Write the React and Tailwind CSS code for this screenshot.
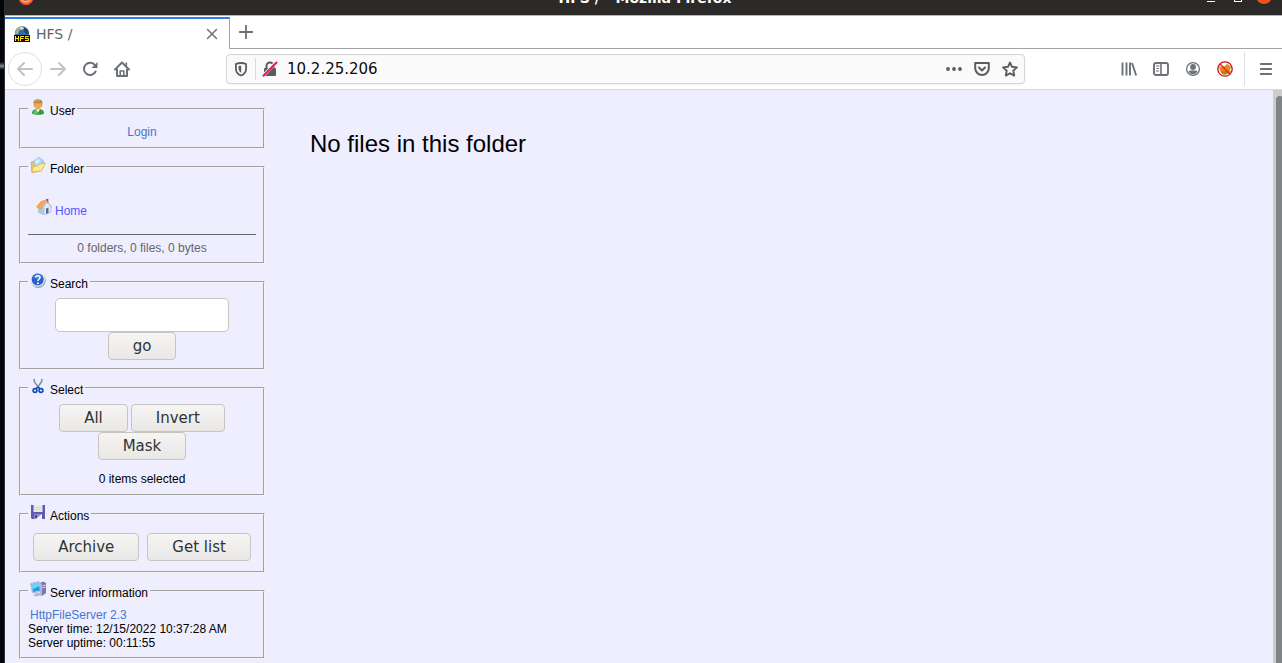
import React from "react";

function FirefoxIcon() {
  return (
    <svg width="16" height="16" viewBox="0 0 16 16" aria-hidden="true">
      <circle cx="8" cy="8" r="7" fill="#ff8a2a" />
      <path d="M1 8a7 7 0 0 0 14 0l-1 2a7 7 0 0 1-12 0z" fill="#f0394f" />
      <circle cx="8" cy="7" r="4" fill="#8a55d8" />
      <path d="M3 8c2 4 7 4 9 0-1 5-8 6-9 0z" fill="#ffb52e" />
    </svg>
  );
}

function HfsIcon() {
  return (
    <svg width="16" height="16" viewBox="0 0 16 16" aria-hidden="true">
      <circle cx="8" cy="7.5" r="7.2" fill="#2f6cab" />
      <path d="M2 4l3-3 3-.7L7 3 5 5 4 8H1z" fill="#b5ad8c" />
      <path d="M9 1l4 2 2 4-3 1-2-3z" fill="#2c4a4a" />
      <path d="M6 1h3l1 2-3 1z" fill="#d8e5e8" />
      <rect y="9" width="16" height="7" fill="#2a0600" />
      <path
        d="M1.500 10v5M4.500 10v5M1.500 12.500h3M6.500 15v-4.500h3.500M6.500 12.500h3M14.800 10.500h-3.300v2h3v2h-3.500"
        fill="none"
        stroke="#ffe51f"
        strokeWidth="1"
      />
    </svg>
  );
}

function CloseIcon() {
  return (
    <svg width="12" height="12" viewBox="0 0 12 12" fill="none" stroke="#6c7077" strokeWidth="1.500" strokeLinecap="round" aria-hidden="true">
      <path d="M1.500 1.500l9 9M10.500 1.500l-9 9" />
    </svg>
  );
}

function PlusIcon() {
  return (
    <svg width="16" height="16" viewBox="0 0 16 16" fill="none" stroke="#6c7077" strokeWidth="1.800" strokeLinecap="round" aria-hidden="true">
      <path d="M8 1.700v12.600M1.700 8h12.600" />
    </svg>
  );
}

function ArrowIcon({ flip }) {
  return (
    <svg width="18" height="18" viewBox="0 0 18 18" fill="none" stroke="#c0c2c6" strokeWidth="2" strokeLinecap="round" strokeLinejoin="round" aria-hidden="true">
      {flip ? <path d="M2 9h14M10 3l6 6-6 6" /> : <path d="M16 9H2M8 3L2 9l6 6" />}
    </svg>
  );
}

function ReloadIcon() {
  return (
    <svg width="16" height="16" viewBox="0 0 16 16" fill="none" aria-hidden="true">
      <path d="M13 4.300A6.100 6.100 0 1 0 13.600 10.500" stroke="#6c7077" strokeWidth="2" strokeLinecap="round" />
      <path d="M15.500 1v6h-6z" fill="#6c7077" />
    </svg>
  );
}

function HomeIcon() {
  return (
    <svg width="16" height="16" viewBox="0 0 16 16" fill="none" stroke="#6c7077" strokeWidth="2" strokeLinejoin="round" strokeLinecap="round" aria-hidden="true">
      <path d="M1 8.500L8 1.500l7 7M3 8.500V15h10V8.500" />
      <path d="M6.200 14.500V10h3.600v4.500" strokeWidth="1.600" />
      <path d="M12.300 2v3" strokeWidth="1.600" />
    </svg>
  );
}

function ShieldIcon() {
  return (
    <svg width="14" height="16" viewBox="0 0 14 16" aria-hidden="true">
      <path d="M7 2c2 0 3.700.4 5.100 1v4.500C12.100 11 10 13.500 7 14.500 4 13.500 1.900 11 1.900 7.500V3C3.300 2.400 5 2 7 2z" fill="none" stroke="#5c5c60" strokeWidth="1.800" />
      <path d="M7.200 4.700v7C5.500 10.900 4.600 9.500 4.600 7.500V5.100z" fill="#5c5c60" />
    </svg>
  );
}

function InsecureLockIcon() {
  return (
    <svg width="16" height="16" viewBox="0 0 16 16" aria-hidden="true">
      <path d="M4.500 8V5a3.500 3.500 0 0 1 7 0v3" fill="none" stroke="#5c5c60" strokeWidth="2" />
      <rect x="2" y="7" width="12" height="8" rx="1" fill="#5c5c60" />
      <path d="M.8 15.200L14.400 1" stroke="#fafafb" strokeWidth="3.200" />
      <path d="M1.500 14.800L14.500 1.500" stroke="#fb0f4a" strokeWidth="2" strokeLinecap="round" />
    </svg>
  );
}

function DotsIcon() {
  return (
    <svg width="16" height="16" viewBox="0 0 16 16" fill="#5c5c60" aria-hidden="true">
      <circle cx="2" cy="8" r="1.900" />
      <circle cx="8" cy="8" r="1.900" />
      <circle cx="14" cy="8" r="1.900" />
    </svg>
  );
}

function PocketIcon() {
  return (
    <svg width="16" height="16" viewBox="0 0 16 16" fill="none" stroke="#5c5c60" strokeWidth="2" strokeLinecap="round" strokeLinejoin="round" aria-hidden="true">
      <path d="M1.200 2h13.600v5.200a6.800 6.800 0 0 1-13.600 0z" />
      <path d="M5 6.500l3 3 3-3" />
    </svg>
  );
}

function StarIcon() {
  return (
    <svg width="16" height="16" viewBox="0 0 16 16" fill="none" stroke="#5c5c60" strokeWidth="1.900" strokeLinejoin="round" aria-hidden="true">
      <path d="M8 1.500l2 4.300 4.900.6-3.600 3.300.9 4.900L8 12.200l-4.200 2.400.9-4.900L1.100 6.400 6 5.800z" />
    </svg>
  );
}

function LibraryIcon() {
  return (
    <svg width="16" height="16" viewBox="0 0 16 16" fill="none" stroke="#6c7077" strokeWidth="1.900" aria-hidden="true">
      <path d="M1.500 1.500v13M5.500 1.500v13M9 1.500v13M11 2l4.200 12.500" />
    </svg>
  );
}

function SidebarIcon() {
  return (
    <svg width="16" height="16" viewBox="0 0 16 16" fill="none" stroke="#6c7077" aria-hidden="true">
      <rect x="1" y="2" width="14" height="12" rx="2" strokeWidth="1.900" />
      <path d="M8 2v12" strokeWidth="1.600" />
      <path d="M3 5h3.500M3.500 7.500H6M3 10h3" strokeWidth="1" />
    </svg>
  );
}

function AccountIcon() {
  return (
    <svg width="16" height="16" viewBox="0 0 16 16" aria-hidden="true">
      <circle cx="8" cy="8" r="6.400" fill="none" stroke="#6c7077" strokeWidth="1.300" />
      <circle cx="8" cy="6" r="2.900" fill="#6c7077" />
      <path d="M3.500 10.300c1-1.200 2-.8 4.500-.8s3.500-.4 4.500.8c-1 1.900-2.500 2.900-4.500 2.900s-3.500-1-4.500-2.900z" fill="#6c7077" />
    </svg>
  );
}

function BlockedFoxIcon() {
  return (
    <svg width="16" height="16" viewBox="0 0 16 16" aria-hidden="true">
      <circle cx="8" cy="8" r="7" fill="#fff" />
      <path d="M2 5l2 1 4-1 2-2 2 1 2 2-1 3 1 2-3 2-4 1-2-1-2-3z" fill="#e58a14" />
      <path d="M4 11l4-1 4 1-4 2z" fill="#b8741a" />
      <circle cx="8" cy="8" r="7.200" fill="none" stroke="#c8101a" strokeWidth="1.300" />
      <path d="M3 3l10 10" stroke="#d52b1c" strokeWidth="1.400" />
    </svg>
  );
}

function MenuIcon() {
  return (
    <svg width="16" height="16" viewBox="0 0 16 16" stroke="#6c7077" strokeWidth="1.800" strokeLinecap="round" aria-hidden="true">
      <path d="M2.800 3h10.400M2.800 8h10.400M2.800 13h10.400" />
    </svg>
  );
}

function UserIcon() {
  return (
    <svg width="16" height="16" viewBox="0 0 16 16" aria-hidden="true">
      <path d="M2 14.500C2 11 4.500 10 8 10s6 1 6 4.500c-1.500 1.700-10.500 1.700-12 0z" fill="#2c9a36" />
      <path d="M3.500 12.500c1-1.500 2-1.500 3-1.500l1 4H3.500z" fill="#5fc45a" />
      <path d="M6 10h4l-2 4z" fill="#e9f7ec" />
      <path d="M3.500 3C4 .8 6 .2 8 .2s4 .6 4.500 2.800l-.5 4.500H4z" fill="#b58a3c" />
      <path d="M4.500 4c2 .6 5 .6 7 0 .3 4-1.200 6.500-3.500 6.500S4.200 8 4.500 4z" fill="#fba452" />
      <path d="M5 1.200h5.500v1.500H5z" fill="#c8a455" />
    </svg>
  );
}

function FolderIcon() {
  return (
    <svg width="16" height="16" viewBox="0 0 16 16" aria-hidden="true">
      <path d="M1 5l4-1 1 1 7-1 1 3-3 7-9 1.500z" fill="#e9c65e" stroke="#cfa642" strokeWidth=".7" />
      <path d="M3.500 4.500L8.500.3 13.800 4l-3.500 5-6 1z" fill="#b0d9f3" stroke="#8abada" strokeWidth=".7" />
      <path d="M5 4.500l3.500-2.700L10 4 7 7z" fill="#dcf1fd" />
      <path d="M1.500 15l2-5.500 4-.5 2-2 6-1-4 8z" fill="#fdea90" stroke="#d2ae50" strokeWidth=".7" />
    </svg>
  );
}

function HouseIcon() {
  return (
    <svg width="16" height="16" viewBox="0 0 16 16" aria-hidden="true">
      <path d="M2.500 8.500v5l6 2.500 6.500-3V7l-4-4.500L8 8z" fill="#e3edf8" stroke="#93aac4" strokeWidth=".6" />
      <path d="M2.500 8.500v5l6 2.500V9z" fill="#a8cae8" />
      <path d="M10.300 0h2v4.500l-2-1z" fill="#d02a1e" />
      <path d="M.5 8L5 2.500l5-1.500-4 6.500-1 2.500z" fill="#ffa54a" stroke="#e48a3a" strokeWidth=".6" />
      <path d="M6 9.500L10.500 2l5 6.500" fill="none" stroke="#b8bdc8" strokeWidth="1.200" />
      <path d="M10 9.500l2.500-1v5.500l-2.500 1z" fill="#526b92" />
    </svg>
  );
}

function HelpIcon() {
  return (
    <svg width="16" height="16" viewBox="0 0 16 16" aria-hidden="true">
      <circle cx="8.300" cy="8.500" r="7.400" fill="#9c9ea7" />
      <circle cx="7.700" cy="7.500" r="7.300" fill="#e5e7ef" />
      <circle cx="7.700" cy="7.500" r="6" fill="#2860cf" />
      <path d="M3 5a5 5 0 0 1 9 0c-2 2-7 2-9 0z" fill="#4a80de" />
      <path d="M5.700 5.500c0-2.500 4.300-2.500 4.300 0C10 7 7.900 7 7.900 9" fill="none" stroke="#fff" strokeWidth="1.500" />
      <circle cx="7.900" cy="11.200" r="1" fill="#fff" />
    </svg>
  );
}

function ScissorsIcon() {
  return (
    <svg width="16" height="16" viewBox="0 0 16 16" fill="none" aria-hidden="true">
      <path d="M4 1l.5 3L9.500 10.500M12 1l-.5 3L6.500 10.500" stroke="#8492a2" strokeWidth="1.700" />
      <path d="M5 3l3 4" stroke="#d4dce5" strokeWidth=".8" />
      <circle cx="5" cy="12.500" r="1.900" stroke="#0d4eb5" strokeWidth="1.600" />
      <circle cx="11" cy="12.500" r="1.900" stroke="#0d4eb5" strokeWidth="1.600" />
      <path d="M6 10.800L8 9l2 1.800" stroke="#0d4eb5" strokeWidth="1.500" />
    </svg>
  );
}

function DiskIcon() {
  return (
    <svg width="16" height="16" viewBox="0 0 16 16" aria-hidden="true">
      <path d="M1 1h14v14H2l-1-1z" fill="#5f58b4" />
      <rect x="3.500" y="1" width="9" height="7" fill="#e9ebe6" />
      <path d="M4.500 3.500h7M4.500 5.500h7" stroke="#d3d6d3" />
      <rect x="4" y="10" width="8" height="5" fill="#8f92cc" />
      <path d="M6 15l6-5v5z" fill="#f4f5fb" />
      <rect x="5" y="11" width="2" height="3" fill="#4c4698" />
    </svg>
  );
}

function ServerIcon() {
  return (
    <svg width="16" height="16" viewBox="0 0 16 16" aria-hidden="true">
      <path d="M10 2l3-1.500L16 2v10l-4 3-2-1z" fill="#7777b4" />
      <path d="M10 2l2 1v12l-2-1z" fill="#b5b6dc" />
      <path d="M12.500 5l3-1M12.500 7l3-1" stroke="#dadbf0" />
      <path d="M.5 2.500L9 .5l2 10-8.500 1.500z" fill="#c8d4ea" stroke="#9fadc8" strokeWidth=".7" />
      <path d="M1.500 3.300L8.500 1.600l1.500 8-7 1.400z" fill="#229be6" />
      <path d="M1.500 3.300L8.500 1.600l.6 3.400-6.500 3.500z" fill="#70d1fb" />
      <path d="M3 14.500l3-2.300L10 12l1 2-5 1.500z" fill="#b3b7c5" />
    </svg>
  );
}

function Panel({ icon, title, children, className }) {
  return (
    <fieldset className="min-w-0 border-2 border-[#f6f4f1] px-[7px] [border-style:groove]">
      <legend className="flex h-[19px] gap-1 px-[2px]">
        {icon}
        <span className="pt-[5px]">{title}</span>
      </legend>
      <div className={className}>{children}</div>
    </fieldset>
  );
}

function GtkButton({ children }) {
  return (
    <button
      type="button"
      className="h-7 rounded border border-[#c9c4be] bg-linear-to-b from-[#f6f5f3] to-[#e9e8e6] px-6 font-['DejaVu_Sans',sans-serif] text-[15px] leading-6 text-[#2e3436]"
    >
      {children}
    </button>
  );
}

function ToolButton({ label, children }) {
  return (
    <button type="button" aria-label={label} className="flex size-8 items-center justify-center">
      {children}
    </button>
  );
}

export default function App() {
  return (
    <div className="flex h-screen overflow-hidden bg-[#02060c] font-['DejaVu_Sans',sans-serif]">
      <div className="flex w-[5px] shrink-0 flex-col border-r border-[#303236] pt-[62px]">
        <div className="h-2 bg-linear-to-b from-[#02060c] via-[#7f93a0] to-[#02060c]" />
      </div>
      <div className="flex min-w-0 flex-1 flex-col bg-white">
        <header className="flex h-4 shrink-0 items-end justify-between overflow-hidden border-b border-[#b8b3b6] bg-[#2b2a28] pr-[10px] pb-[9px] pl-[13px]">
          <div className="flex flex-1">
            <FirefoxIcon />
          </div>
          <h1 className="text-sm leading-4 font-bold text-white">HFS / - Mozilla Firefox</h1>
          <div className="flex flex-1 items-end justify-end gap-[14px]">
            <div className="mb-1 flex items-end gap-[19px]">
              <button type="button" aria-label="Minimize" className="h-px w-2 bg-white" />
              <button type="button" aria-label="Maximize" className="size-2 border border-white" />
            </div>
            <button type="button" aria-label="Close window" className="mb-[2px] size-4 rounded-full bg-[#e95420]" />
          </div>
        </header>

        <div className="flex h-[33px] shrink-0">
          <div className="mt-px flex w-[225px] items-center border-t-2 border-r border-t-[#2f7bf0] border-r-[#a3a3a6] pr-[11px] pl-[9px]">
            <HfsIcon />
            <span className="ml-[6px] flex-1 text-sm text-[#5f646c]">HFS /</span>
            <button type="button" aria-label="Close tab">
              <CloseIcon />
            </button>
          </div>
          <div className="flex flex-1 border-b border-[#a3a3a6]">
            <ToolButton label="New tab">
              <PlusIcon />
            </ToolButton>
          </div>
        </div>

        <nav className="flex h-[41px] shrink-0 items-center border-b border-[#dadadd]">
          <button type="button" aria-label="Back" className="ml-[3px] flex size-[34px] items-center justify-center rounded-full border border-[#dededf]">
            <ArrowIcon />
          </button>
          <ToolButton label="Forward">
            <ArrowIcon flip />
          </ToolButton>
          <ToolButton label="Reload">
            <ReloadIcon />
          </ToolButton>
          <ToolButton label="Home">
            <HomeIcon />
          </ToolButton>
          <div className="mx-[88px] flex h-[30px] min-w-0 flex-1 items-center rounded border border-[#d5d5d8] bg-[#fafafb] pr-[6px] pl-[7px] shadow-xs">
            <ShieldIcon />
            <div className="mr-[6px] ml-[7px] h-[22px] w-px bg-[#d9d9dc]" />
            <InsecureLockIcon />
            <input
              aria-label="Address"
              defaultValue="10.2.25.206"
              className="ml-[9px] min-w-0 flex-1 bg-transparent text-[15px] text-[#0c0c0d] outline-none"
            />
            <div className="flex gap-3">
              <button type="button" aria-label="Page actions"><DotsIcon /></button>
              <button type="button" aria-label="Save to Pocket"><PocketIcon /></button>
              <button type="button" aria-label="Bookmark this page"><StarIcon /></button>
            </div>
          </div>
          <ToolButton label="Library"><LibraryIcon /></ToolButton>
          <ToolButton label="Sidebars"><SidebarIcon /></ToolButton>
          <ToolButton label="Account"><AccountIcon /></ToolButton>
          <ToolButton label="Proxy disabled"><BlockedFoxIcon /></ToolButton>
          <div className="ml-[3px] h-[34px] w-px bg-[#e0e0e2]" />
          <div className="ml-[5px]">
            <ToolButton label="Open menu"><MenuIcon /></ToolButton>
          </div>
        </nav>

        <div className="flex min-h-0 flex-1 bg-[#eeeeff]">
          <aside className="flex w-[260px] shrink-0 flex-col gap-2 pt-[9px] pl-[14px] font-['Liberation_Sans',Arial,sans-serif] text-xs leading-[14px] text-black">
            <Panel icon={<UserIcon />} title="User" className="pt-[7px] pb-2 text-center">
              <a href="#login" className="text-[#4477cc]">Login</a>
            </Panel>
            <Panel icon={<FolderIcon />} title="Folder" className="pt-[23px] pb-[7px]">
              <a href="#home" className="flex h-[19px] gap-[3px] pl-2 text-[#5555ff]">
                <HouseIcon />
                <span className="pt-[5px]">Home</span>
              </a>
              <div className="mt-4 border-t border-[#666666] pt-[6px] text-center text-[#666666]">
                0 folders, 0 files, 0 bytes
              </div>
            </Panel>
            <Panel icon={<HelpIcon />} title="Search" className="flex flex-col items-center pt-[7px] pb-2">
              <input
                aria-label="Search"
                className="h-[34px] w-[174px] rounded-[5px] border border-[#c9c4be] bg-white px-2 text-sm"
              />
              <GtkButton>go</GtkButton>
            </Panel>
            <Panel icon={<ScissorsIcon />} title="Select" className="pt-[7px] pb-2 text-center">
              <div className="flex flex-wrap justify-center gap-x-[3px] px-6">
                <GtkButton>All</GtkButton>
                <GtkButton>Invert</GtkButton>
                <GtkButton>Mask</GtkButton>
              </div>
              <p className="pt-3">0 items selected</p>
            </Panel>
            <Panel icon={<DiskIcon />} title="Actions" className="flex justify-center gap-2 pt-[10px] pb-[10px]">
              <GtkButton>Archive</GtkButton>
              <GtkButton>Get list</GtkButton>
            </Panel>
            <Panel icon={<ServerIcon />} title="Server information" className="pt-2 pb-[7px]">
              <a href="#hfs" className="block pl-[2px] text-[#4477cc]">HttpFileServer 2.3</a>
              <p>Server time: 12/15/2022 10:37:28 AM</p>
              <p>Server uptime: 00:11:55</p>
            </Panel>
          </aside>
          <main className="min-w-0 flex-1 pt-10 pl-[45px] font-['Liberation_Sans',Arial,sans-serif] text-2xl leading-7 text-black">
            No files in this folder
          </main>
          <div className="flex w-[9px] shrink-0 overflow-hidden bg-[#cdcdcd] pt-[6px] pl-[3px]">
            <div className="w-2 shrink-0 rounded-t bg-[#7f8484]" />
          </div>
        </div>
      </div>
    </div>
  );
}
